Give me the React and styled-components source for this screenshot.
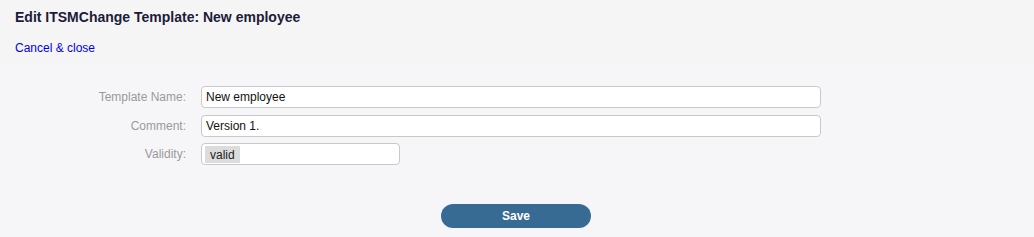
import React from "react"
import styled, { createGlobalStyle } from "styled-components"

const GlobalStyle = createGlobalStyle`
  html, body {
    margin: 0;
    padding: 0;
    background: #f6f6f8;
    font-family: "Liberation Sans", Arial, sans-serif;
  }
`

const Page = styled.div`
  width: 1034px;
  height: 237px;
  background: #f6f6f8;
  overflow: hidden;
`

const Header = styled.header`
  background: #f5f5f5;
  height: 62px;
  padding: 9px 15px 0;
  box-sizing: border-box;
  h1 {
    margin: 0;
    font-size: 14px;
    font-weight: bold;
    color: #1c1c3a;
    line-height: 16px;
  }
  a {
    display: inline-block;
    margin-top: 16px;
    font-size: 12px;
    color: #0000ee;
    text-decoration: none;
    line-height: 14px;
  }
`

const Form = styled.form`
  display: grid;
  grid-template-columns: 186px auto;
  column-gap: 15px;
  row-gap: 6.5px;
  padding-top: 24px;
  align-items: center;
`

const Label = styled.label`
  text-align: right;
  font-size: 12px;
  color: #9a9a9a;
`

const Field = styled.div`
  width: ${(p) => p.$width}px;
  height: 22px;
  box-sizing: border-box;
  border: 1px solid #c9c9c9;
  border-radius: 4px;
  background: #fff;
  display: flex;
  align-items: center;
  padding: 0 4px;
  font-size: 12px;
  color: #111;
`

const Tag = styled.span`
  background: #dcdcdc;
  padding: 2px 5px 1px;
  margin-left: -1px;
  font-size: 12px;
  color: #222;
`

const Actions = styled.div`
  display: flex;
  justify-content: center;
  padding-top: 39px;
  padding-right: 2px;
`

const SaveButton = styled.button`
  width: 150px;
  height: 24px;
  border: none;
  border-radius: 12px;
  background: #386b93;
  color: #fff;
  font-family: "Liberation Sans", Arial, sans-serif;
  font-weight: bold;
  font-size: 12px;
`

export default function App() {
  return (
    <Page>
      <GlobalStyle />
      <Header>
        <h1>Edit ITSMChange Template: New employee</h1>
        <a href="#">Cancel &amp; close</a>
      </Header>
      <Form>
        <Label>Template Name:</Label>
        <Field $width={620}>New employee</Field>
        <Label>Comment:</Label>
        <Field $width={620}>Version 1.</Field>
        <Label>Validity:</Label>
        <Field $width={199}>
          <Tag>valid</Tag>
        </Field>
      </Form>
      <Actions>
        <SaveButton type="button">Save</SaveButton>
      </Actions>
    </Page>
  )
}
